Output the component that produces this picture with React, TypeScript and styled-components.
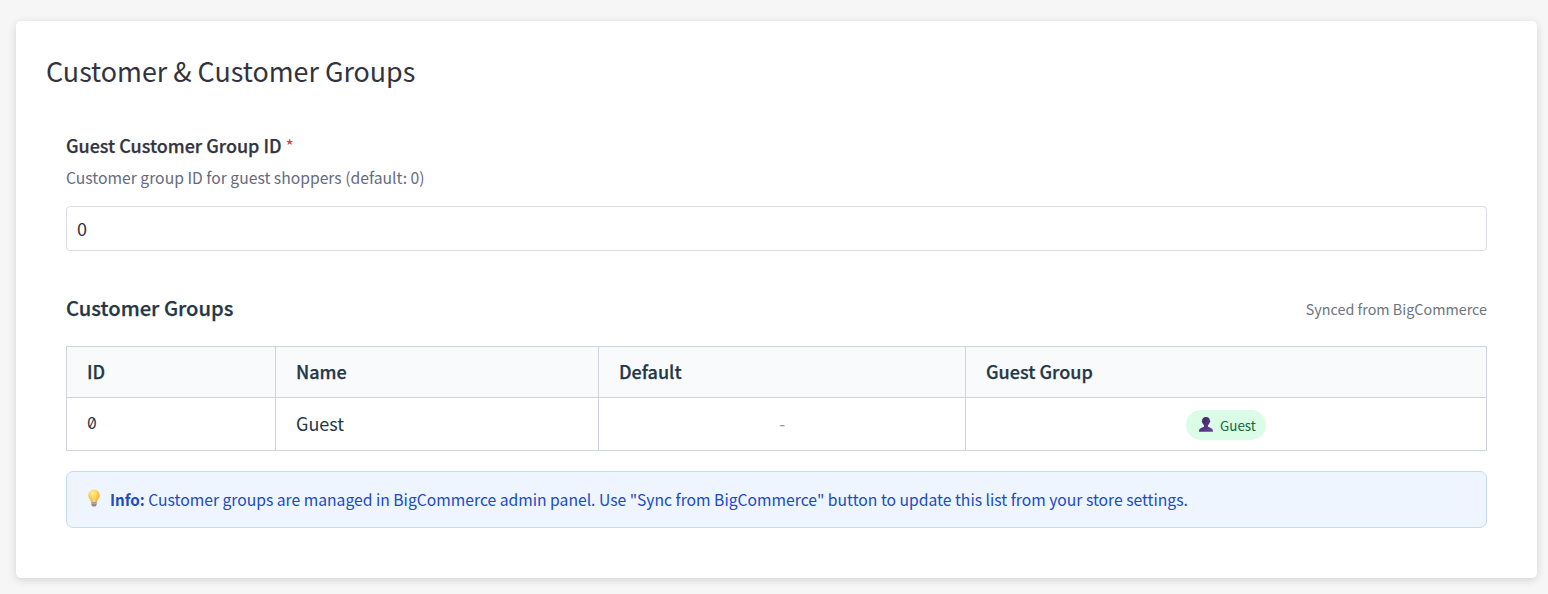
import React from 'react';
import styled, { createGlobalStyle } from 'styled-components';

const GlobalStyle = createGlobalStyle`
  *, *::before, *::after { box-sizing: border-box; }
  body {
    margin: 0;
    background: #f6f6f6;
    color: #313440;
    font-family: "Noto Sans CJK SC", "Noto Sans", sans-serif;
  }
`;

const Page = styled.main`
  padding: 21px 11px 16px 16px;
`;

const Card = styled.section`
  height: 557px;
  padding: 29px 30px 30px;
  background: #fff;
  border-radius: 5px;
  box-shadow: 0 2px 8px rgba(0, 0, 0, 0.15);
`;

const Title = styled.h1`
  margin: 0;
  font-size: 26.87px;
  font-weight: 400;
  line-height: 42px;
`;

const Content = styled.div`
  padding: 41px 20px 0;
`;

const Label = styled.label`
  display: block;
  font-size: 17.95px;
  font-weight: 500;
  line-height: 24px;
  -webkit-text-stroke: 0.25px;
`;

const Required = styled.span`
  color: #d14343;
  font-weight: 400;
  -webkit-text-stroke: 0;
`;

const Hint = styled.p`
  margin: 9px 0 17px;
  color: #666a7f;
  font-size: 15.69px;
  line-height: 23px;
`;

const TextInput = styled.input`
  display: block;
  width: 100%;
  height: 45px;
  padding: 0 10px 2px;
  border: 1px solid #d9dce6;
  border-radius: 4px;
  background: #fff;
  color: #313440;
  font: 400 18px/24px "Noto Sans CJK SC", sans-serif;
  outline: none;
`;

const SectionHeader = styled.header`
  display: flex;
  align-items: center;
  justify-content: space-between;
  height: 30px;
  margin: 42px 0 23px;
`;

const SectionTitle = styled.h2`
  margin: 0;
  color: #253746;
  font-size: 20.2px;
  font-weight: 500;
  line-height: 30px;
  -webkit-text-stroke: 0.25px;
`;

const SyncNote = styled.span`
  padding-top: 2px;
  color: #6c757d;
  font-size: 14.35px;
  line-height: 24px;
`;

const Table = styled.table`
  width: 100%;
  border-collapse: collapse;
  table-layout: fixed;
  color: #253746;
  font-size: 18px;
  line-height: 24px;
`;

const Column = styled.col<{ $width?: number }>`
  width: ${({ $width }) => ($width ? `${$width}px` : 'auto')};
`;

const HeadCell = styled.th`
  height: 51px;
  padding: 0 20px 2px;
  border: 1px solid #d0d4da;
  background: #f8fafc;
  font-weight: 500;
  text-align: left;
  -webkit-text-stroke: 0.25px;
`;

const Cell = styled.td<{ $center?: boolean }>`
  height: 53px;
  padding: 0 20px 2px;
  border: 1px solid #d0d4da;
  text-align: ${({ $center }) => ($center ? 'center' : 'left')};
`;

const BadgeCell = styled(Cell)`
  padding: 2px 20px 0;
`;

const Code = styled.span`
  display: block;
  padding-top: 1px;
  font-family: Inter, sans-serif;
  font-size: 15.5px;
  font-weight: 400;
  font-feature-settings: "zero";
`;

const Muted = styled.span`
  color: #999;
`;

const Badge = styled.span`
  display: inline-flex;
  align-items: center;
  gap: 7px;
  height: 30px;
  padding: 0 10px 1px 13px;
  border-radius: 15px;
  background: #dbfce7;
  color: #11693a;
  font-size: 13.4px;
  line-height: 28px;
  vertical-align: middle;
`;

const InfoBox = styled.aside`
  display: flex;
  align-items: center;
  height: 57px;
  margin-top: 20px;
  padding: 0 20px 1px;
  border: 1px solid #c5daf3;
  border-radius: 7px;
  background: #eef5ff;
  color: #2149c4;
  font-size: 15.68px;
  line-height: 24px;

  svg {
    margin-bottom: 2px;
  }
`;

const InfoText = styled.span`
  margin-left: 9px;
  white-space: pre;

  strong {
    font-size: 15.2px;
  }
`;

const PersonIcon = () => (
  <svg width="14" height="15" viewBox="0 0 14 15" aria-hidden="true">
    <defs>
      <linearGradient id="person" x1="0" y1="0" x2="1" y2="1">
        <stop offset="0" stopColor="#392a50" />
        <stop offset="0.5" stopColor="#533080" />
        <stop offset="1" stopColor="#6c45a0" />
      </linearGradient>
    </defs>
    <path
      d="M7 0C4.500 0 3.100 1.500 3.100 3.600c-.5.1-.6 1.600.2 2 .3 1.100.9 2 1.700 2.600v1.200C4.400 10.600 0 10.400 0 14v.8h14V14c0-3.600-4.400-3.400-5-4.600V8.200c.8-.6 1.400-1.500 1.700-2.600.8-.4.7-1.900.2-2C10.900 1.500 9.500 0 7 0z"
      fill="url(#person)"
    />
  </svg>
);

const BulbIcon = () => (
  <svg width="14" height="18" viewBox="0 0 14 18" aria-hidden="true">
    <defs>
      <radialGradient id="bulb" cx="0.4" cy="0.28" r="0.75">
        <stop offset="0" stopColor="#fff0a0" />
        <stop offset="0.4" stopColor="#ffd65c" />
        <stop offset="1" stopColor="#f4a83a" />
      </radialGradient>
    </defs>
    <path
      d="M7 .5a5.800 5.800 0 0 0-5.800 5.800c0 3.200 2.500 3.900 3 7.200h5.600c.5-3.300 3-4 3-7.200A5.800 5.800 0 0 0 7 .5z"
      fill="url(#bulb)"
    />
    <path d="M5.6 7.5 6.5 13h1l.9-5.500" fill="none" stroke="#ffe9a0" strokeWidth="0.7" />
    <path d="M4.400 13.300h5.200v2.800L8.400 17.500H5.600l-1.200-1.400z" fill="#8d8594" />
    <path d="M4.400 14.700h5.200" stroke="#c4bfc9" strokeWidth="0.7" />
  </svg>
);

export default function App() {
  return (
    <>
      <GlobalStyle />
      <Page>
        <Card>
          <Title>Customer &amp; Customer Groups</Title>
          <Content>
            <Label htmlFor="guest-group">
              Guest Customer Group ID <Required>*</Required>
            </Label>
            <Hint>Customer group ID for guest shoppers (default: 0)</Hint>
            <TextInput id="guest-group" defaultValue="0" />
            <SectionHeader>
              <SectionTitle>Customer Groups</SectionTitle>
              <SyncNote>Synced from BigCommerce</SyncNote>
            </SectionHeader>
            <Table>
              <colgroup>
                <Column $width={209} />
                <Column $width={323} />
                <Column $width={367} />
                <Column />
              </colgroup>
              <thead>
                <tr>
                  <HeadCell>ID</HeadCell>
                  <HeadCell>Name</HeadCell>
                  <HeadCell>Default</HeadCell>
                  <HeadCell>Guest Group</HeadCell>
                </tr>
              </thead>
              <tbody>
                <tr>
                  <Cell><Code>0</Code></Cell>
                  <Cell>Guest</Cell>
                  <Cell $center><Muted>-</Muted></Cell>
                  <BadgeCell $center>
                    <Badge><PersonIcon />Guest</Badge>
                  </BadgeCell>
                </tr>
              </tbody>
            </Table>
            <InfoBox>
              <BulbIcon />
              <InfoText>
                <strong>Info:</strong> Customer groups are managed in BigCommerce admin panel. Use "Sync from BigCommerce" button to update this list from your store settings.
              </InfoText>
            </InfoBox>
          </Content>
        </Card>
      </Page>
    </>
  );
}
